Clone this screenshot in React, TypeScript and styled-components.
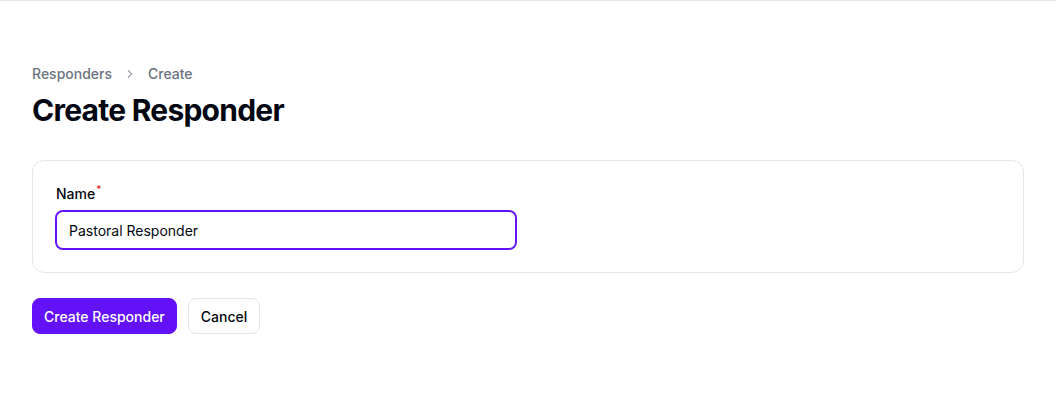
import styled, { createGlobalStyle } from "styled-components";

const GlobalStyle = createGlobalStyle`
  * { box-sizing: border-box; }
  html, body {
    margin: 0;
    background: #ffffff;
    font-family: Inter, "Noto Sans", sans-serif;
    color: #030712;
  }
  body { border-top: 1px solid #e5e7eb; }
`;

const Page = styled.main`
  padding: 63px 32px 40px;
  display: flex;
  flex-direction: column;
`;

const Breadcrumbs = styled.nav`
  display: flex;
  align-items: center;
  gap: 11px;
  font-size: 14px;
  line-height: 20px;
  font-weight: 500;
  color: #6b7280;
`;

const Title = styled.h1`
  margin: 8px 0 0;
  font-size: 30px;
  line-height: 36px;
  font-weight: 700;
  letter-spacing: -0.025em;
  color: #030712;
`;

const Card = styled.section`
  margin-top: 32px;
  border: 1px solid #e5e7eb;
  border-radius: 12px;
  padding: 23px 23px 23px;
  display: flex;
  flex-direction: column;
  gap: 7px;
`;

const Label = styled.label`
  font-size: 14px;
  line-height: 20px;
  font-weight: 500;
  color: #030712;
`;

const Required = styled.sup`
  color: #dc2626;
  font-size: 10px;
  line-height: 0;
  margin-left: 1px;
  vertical-align: 6px;
`;

const Input = styled.input`
  width: 460px;
  height: 38px;
  border: 1px solid #6311f6;
  box-shadow: 0 0 0 1px #6311f6;
  border-radius: 7px;
  padding: 0 12px;
  font-family: inherit;
  font-size: 14px;
  color: #030712;
  outline: none;
`;

const Actions = styled.div`
  margin-top: 25px;
  display: flex;
  gap: 11px;
`;

const Button = styled.button<{ $primary?: boolean }>`
  height: 36px;
  padding: 0 ${(p) => (p.$primary ? "11px" : "12px")};
  border-radius: 8px;
  font-family: inherit;
  font-size: 14px;
  font-weight: 500;
  cursor: pointer;
  border: 1px solid ${(p) => (p.$primary ? "#6311f6" : "#e5e7eb")};
  background: ${(p) => (p.$primary ? "#6311f6" : "#ffffff")};
  color: ${(p) => (p.$primary ? "#ffffff" : "#030712")};
`;

const Chevron = () => (
  <svg width="14" height="14" viewBox="0 0 20 20" fill="none">
    <path d="M7.5 5l5 5-5 5" stroke="#9ca3af" strokeWidth="1.6" strokeLinecap="round" strokeLinejoin="round" />
  </svg>
);

export default function App() {
  return (
    <>
      <GlobalStyle />
      <Page>
        <Breadcrumbs>
          <span>Responders</span>
          <Chevron />
          <span>Create</span>
        </Breadcrumbs>
        <Title>Create Responder</Title>
        <Card>
          <Label htmlFor="name">
            Name<Required>*</Required>
          </Label>
          <Input id="name" defaultValue="Pastoral Responder" />
        </Card>
        <Actions>
          <Button $primary>Create Responder</Button>
          <Button>Cancel</Button>
        </Actions>
      </Page>
    </>
  );
}
